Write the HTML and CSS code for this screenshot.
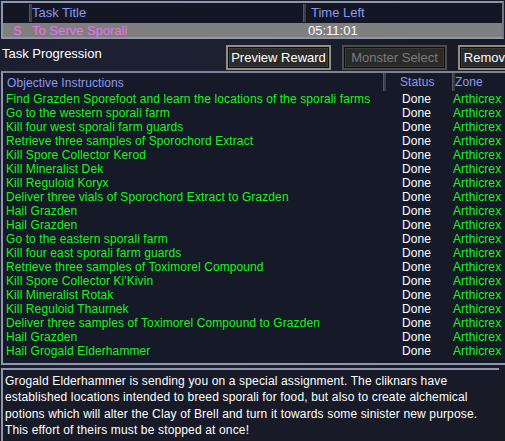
FILE: index.html
```html
<!DOCTYPE html>
<html>
<head>
<meta charset="utf-8">
<link rel="stylesheet" href="styles.css">
</head>
<body>
<div class="window">
  <div class="tasklist">
    <div class="tl-head">
      <div class="c-type"></div>
      <div class="c-title"><span class="sep"></span>Task Title</div>
      <div class="c-time"><span class="sep"></span>Time Left</div>
    </div>
    <div class="tl-row selected">
      <div class="c-type pink">S</div>
      <div class="c-title pink">To Serve Sporali</div>
      <div class="c-time white">05:11:01</div>
    </div>
  </div>

  <div class="toolbar">
    <div class="tb-label">Task Progression</div>
    <div class="tb-buttons">
      <button class="btn">Preview Reward</button>
      <button class="btn disabled">Monster Select</button>
      <button class="btn btn-remove">Remove</button>
    </div>
  </div>

  <div class="objectives">
    <div class="ob-head">
      <div class="o-text">Objective Instructions</div>
      <div class="o-status"><span class="sep"></span>Status</div>
      <div class="o-zone"><span class="sep"></span>Zone</div>
    </div>
    <div class="ob-body">
      <div class="ob-row"><div class="o-text">Find Grazden Sporefoot and learn the locations of the sporali farms</div><div class="o-status">Done</div><div class="o-zone">Arthicrex</div></div>
      <div class="ob-row"><div class="o-text">Go to the western sporali farm</div><div class="o-status">Done</div><div class="o-zone">Arthicrex</div></div>
      <div class="ob-row"><div class="o-text">Kill four west sporali farm guards</div><div class="o-status">Done</div><div class="o-zone">Arthicrex</div></div>
      <div class="ob-row"><div class="o-text">Retrieve three samples of Sporochord Extract</div><div class="o-status">Done</div><div class="o-zone">Arthicrex</div></div>
      <div class="ob-row"><div class="o-text">Kill Spore Collector Kerod</div><div class="o-status">Done</div><div class="o-zone">Arthicrex</div></div>
      <div class="ob-row"><div class="o-text">Kill Mineralist Dek</div><div class="o-status">Done</div><div class="o-zone">Arthicrex</div></div>
      <div class="ob-row"><div class="o-text">Kill Reguloid Koryx</div><div class="o-status">Done</div><div class="o-zone">Arthicrex</div></div>
      <div class="ob-row"><div class="o-text">Deliver three vials of Sporochord Extract to Grazden</div><div class="o-status">Done</div><div class="o-zone">Arthicrex</div></div>
      <div class="ob-row"><div class="o-text">Hail Grazden</div><div class="o-status">Done</div><div class="o-zone">Arthicrex</div></div>
      <div class="ob-row"><div class="o-text">Hail Grazden</div><div class="o-status">Done</div><div class="o-zone">Arthicrex</div></div>
      <div class="ob-row"><div class="o-text">Go to the eastern sporali farm</div><div class="o-status">Done</div><div class="o-zone">Arthicrex</div></div>
      <div class="ob-row"><div class="o-text">Kill four east sporali farm guards</div><div class="o-status">Done</div><div class="o-zone">Arthicrex</div></div>
      <div class="ob-row"><div class="o-text">Retrieve three samples of Toximorel Compound</div><div class="o-status">Done</div><div class="o-zone">Arthicrex</div></div>
      <div class="ob-row"><div class="o-text">Kill Spore Collector Ki'Kivin</div><div class="o-status">Done</div><div class="o-zone">Arthicrex</div></div>
      <div class="ob-row"><div class="o-text">Kill Mineralist Rotak</div><div class="o-status">Done</div><div class="o-zone">Arthicrex</div></div>
      <div class="ob-row"><div class="o-text">Kill Reguloid Thaurnek</div><div class="o-status">Done</div><div class="o-zone">Arthicrex</div></div>
      <div class="ob-row"><div class="o-text">Deliver three samples of Toximorel Compound to Grazden</div><div class="o-status">Done</div><div class="o-zone">Arthicrex</div></div>
      <div class="ob-row"><div class="o-text">Hail Grazden</div><div class="o-status">Done</div><div class="o-zone">Arthicrex</div></div>
      <div class="ob-row"><div class="o-text">Hail Grogald Elderhammer</div><div class="o-status">Done</div><div class="o-zone">Arthicrex</div></div>
    </div>
  </div>

  <div class="description">Grogald Elderhammer is sending you on a special assignment. The cliknars have established locations intended to breed sporali for food, but also to create alchemical potions which will alter the Clay of Brell and turn it towards some sinister new purpose. This effort of theirs must be stopped at once!</div>
</div>
</body>
</html>
```

FILE: styles.css
```css
*, *::before, *::after {
  box-sizing: border-box;
}
html, body {
  margin: 0;
  padding: 0;
  height: 100%;
  overflow: hidden;
}
body {
  background: #1b1e2a;
  background-image: radial-gradient(circle at 30% 40%, #20243a 0%, #181b26 70%);
  font-family: "Liberation Sans", Arial, sans-serif;
  font-size: 12px;
  color: #ffffff;
}
.window {
  width: 540px;
  display: flex;
  flex-direction: column;
}

/* ---- task list ---- */
.tasklist {
  margin: 1px 0 0 1px;
  width: 503px;
  height: 38px;
  border: 2px solid #8e96ad;
  border-right-color: #6e7488;
  background: #141723;
  padding-top: 2px;
}
.tl-head, .tl-row {
  display: flex;
  align-items: center;
}
.tl-head {
  height: 18px;
  color: #8c98f2;
  font-size: 13px;
}
.tl-row {
  height: 14px;
  font-size: 13px;
}
.selected {
  background: #7f7f7f;
}
.c-type {
  width: 26px;
  padding-left: 10px;
}
.c-title {
  width: 274px;
  padding-left: 0;
}
.tl-row .c-title { padding-left: 3px; }
.c-time {
  flex: 1;
}
.tl-head .c-time .sep { margin-right: 5px; }
.tl-row .c-time { padding-left: 5px; }
.sep {
  display: inline-block;
  width: 3px;
  height: 18px;
  background: #3c3e44;
  border-left: 1px solid #55585e;
  vertical-align: middle;
  position: relative;
  top: -1px;
}
.pink { color: #e872e8; }
.white { color: #ffffff; }

/* ---- toolbar ---- */
.toolbar {
  display: flex;
  align-items: flex-start;
  height: 32px;
}
.tb-label {
  width: 226px;
  font-size: 13px;
  padding-left: 2px;
  padding-top: 7px;
}
.tb-buttons {
  display: flex;
  gap: 11px;
  padding-top: 6px;
}
.btn {
  height: 25px;
  width: 105px;
  background: #2b2b2c;
  color: #ffffff;
  font-family: "Liberation Sans", Arial, sans-serif;
  font-size: 13px;
  border: 2px solid #8f8e80;
  box-shadow: inset 0 0 0 1px #0d0d0d, inset 0 0 0 2px #3b3b3b;
  padding: 0 2px;
  text-align: center;
  white-space: nowrap;
}
.btn-remove {
  width: 60px;
}
.btn.disabled {
  color: #7c7c7c;
  border-color: #4c4c48;
  background: #2a2a2a;
}

/* ---- objectives ---- */
.objectives {
  margin-left: 1px;
  width: 530px;
  height: 294px;
  border: 2px solid #8e96ad;
  border-top-color: #7d849a;
  background: #161a28;
}
.ob-head {
  display: flex;
  align-items: center;
  height: 19px;
  color: #8c98f2;
  font-size: 12px;
  letter-spacing: 0.1px;
}
.ob-body {
  display: flex;
  flex-direction: column;
}
.ob-row {
  display: flex;
  align-items: center;
  height: 14px;
  font-size: 12px;
  letter-spacing: 0.1px;
}
.o-text {
  width: 380px;
  padding-left: 3px;
  color: #18f518;
  white-space: nowrap;
}
.ob-head .o-text { color: #8c98f2; padding-left: 4px; }
.o-status {
  width: 69px;
  padding-left: 19px;
  color: #ffffff;
}
.ob-head .o-status { color: #8c98f2; padding-left: 0; }
.o-zone {
  flex: 1;
  color: #18f518;
  padding-left: 1px;
}
.ob-head .o-zone { color: #8c98f2; padding-left: 0; }
.ob-head .sep {
  height: 18px;
  margin-right: 14px;
}
.ob-head .o-zone .sep { margin-right: 0; }

/* ---- description ---- */
.description {
  margin: 3px 0 0 1px;
  border: 2px solid #8e96ad;
  border-right: none;
  border-bottom: none;
  background: #181b27;
  padding: 3px 0 0 2px;
  font-size: 12px;
  letter-spacing: 0.15px;
  line-height: 16.4px;
  color: #ffffff;
  width: 498px;
  height: 80px;
}
```
